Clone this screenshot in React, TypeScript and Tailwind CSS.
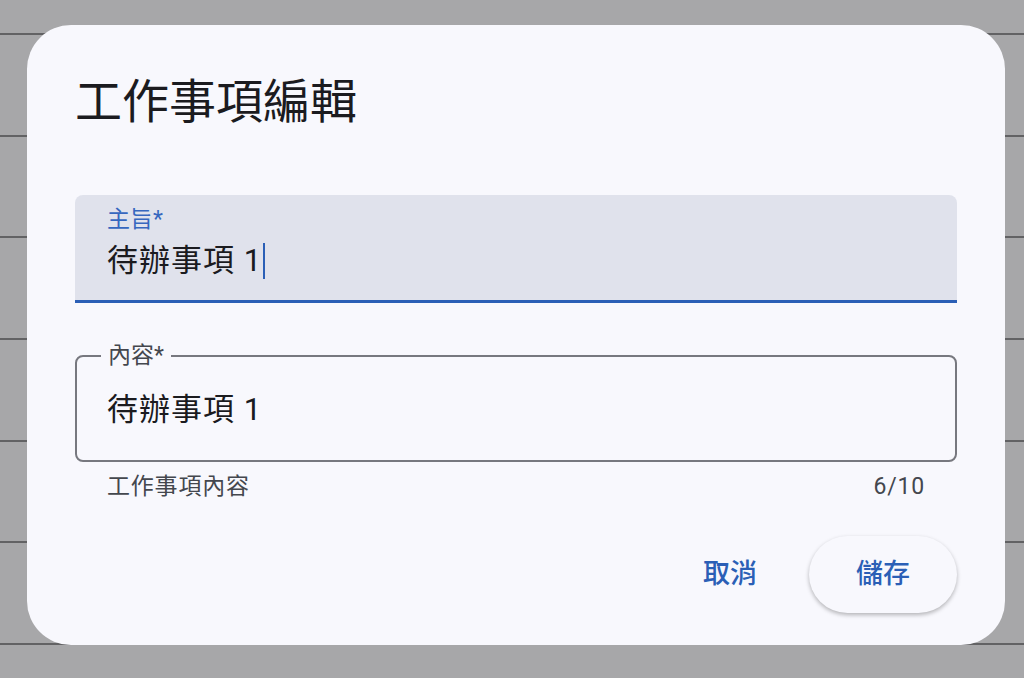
import React from 'react'

const font = { fontFamily: 'Roboto, "Noto Sans CJK TC", sans-serif' }

export default function App() {
  const rows = [0, 1, 2, 3, 4, 5, 6]

  return (
    <div className="relative w-[1024px] h-[678px] overflow-hidden bg-[#a7a7a9]" style={font}>
      {/* list behind the scrim */}
      <div className="flex flex-col pt-[33px]">
        {rows.map((r) => (
          <div key={r} className="h-[101.7px] shrink-0 border-t-2 border-[#626264]" />
        ))}
      </div>

      {/* dialog */}
      <div className="absolute left-[27px] top-[25px] w-[978px] h-[620px] rounded-[44px] bg-[#f8f8fd] flex flex-col px-[48px] pt-[49px] pb-[32px]">
        <h1 className="text-[47px] leading-[60px] text-[#1b1b1f] font-normal -mt-[2px]">工作事項編輯</h1>

        {/* filled field */}
        <div className="mt-[63px] h-[108px] rounded-t-[8px] bg-[#e0e2ec] border-b-[3px] border-[#2b5fb6] flex flex-col px-[32px] pt-[10px]">
          <div className="text-[23px] leading-[30px] text-[#3667bf]">主旨*</div>
          <div className="text-[31px] leading-[44px] tracking-[1px] text-[#1b1b1f] mt-[4px] flex items-center">
            <span>待辦事項 1</span>
            <span className="inline-block w-[2px] h-[36px] bg-[#2b5fb6] ml-[1px]" />
          </div>
        </div>

        {/* outlined field */}
        <div className="relative mt-[52px] h-[107px] rounded-[8px] border-2 border-[#77787f] flex items-center px-[30px] pt-[2px]">
          <span className="absolute left-[24px] -top-[16px] px-[7px] bg-[#f8f8fd] text-[23px] leading-[30px] text-[#44474e]">內容*</span>
          <span className="text-[31px] leading-[44px] tracking-[1px] text-[#1b1b1f]">待辦事項 1</span>
        </div>
        <div className="flex justify-between px-[32px] mt-[10px] text-[23px] leading-[30px] tracking-[0.8px] text-[#44474e]">
          <span>工作事項內容</span>
          <span>6/10</span>
        </div>

        {/* actions */}
        <div className="mt-auto flex justify-end items-center gap-[8px]">
          <button className="h-[77px] px-[44px] rounded-full text-[27px] font-medium text-[#2b5fb6]">取消</button>
          <button className="h-[77px] w-[148px] rounded-full bg-[#f8f8fd] text-[27px] font-medium text-[#2b5fb6] shadow-[0_2px_4px_rgba(0,0,0,0.28)]">儲存</button>
        </div>
      </div>
    </div>
  )
}
